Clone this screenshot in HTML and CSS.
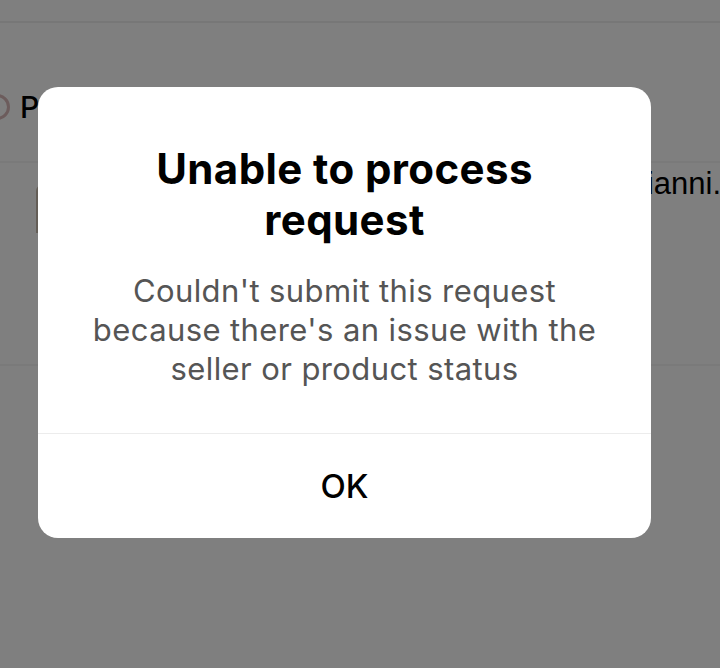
FILE: index.html
```html
<!DOCTYPE html>
<html lang="en">
<head>
    <meta charset="UTF-8">
    <meta name="viewport" content="width=device-width, initial-scale=1.0">
    <title>Unable to process request</title>
    <link rel="stylesheet" href="styles.css">
</head>
<body>
    <!-- Page behind the dialog -->
    <div class="page">
        <div class="top-bar"></div>
        <div class="shop-row">
            <span class="shop-avatar"></span>
            <span class="shop-name">P</span>
        </div>
        <div class="product-row">
            <span class="product-thumb"></span>
            <span class="product-title">Gianni.</span>
        </div>
    </div>

    <!-- Dim overlay + dialog -->
    <div class="overlay">
        <div class="dialog">
            <div class="dialog-body">
                <h1 class="dialog-title">Unable to process request</h1>
                <p class="dialog-text">Couldn't submit this request because there's an issue with the seller or product status</p>
            </div>
            <button class="dialog-button">OK</button>
        </div>
    </div>
</body>
</html>
```

FILE: styles.css
```css
* {
    margin: 0;
    padding: 0;
    box-sizing: border-box;
}

body {
    font-family: Inter, 'Liberation Sans', sans-serif;
    background: #ffffff;
    width: 720px;
    height: 668px;
    overflow: hidden;
    position: relative;
}

/* Background page */
.page {
    display: flex;
    flex-direction: column;
}

.top-bar {
    height: 23px;
    border-bottom: 2px solid #efefef;
}

.shop-row {
    height: 140px;
    display: flex;
    align-items: center;
    gap: 10px;
    padding-top: 30px;
    border-bottom: 2px solid #f4f4f4;
}

.shop-avatar {
    width: 26px;
    height: 26px;
    margin-left: -16px;
    border-radius: 50%;
    border: 3px solid #d9b8b8;
}

.shop-name {
    font-size: 30px;
    font-weight: 500;
    color: #000;
}

.product-row {
    height: 203px;
    display: flex;
    justify-content: space-between;
    overflow: hidden;
    border-bottom: 2px solid #f4f4f4;
}

.product-thumb {
    width: 50px;
    height: 48px;
    margin: 22px 0 0 36px;
    border-left: 3px solid #c9bcae;
    border-top-left-radius: 6px;
}

.product-title {
    font-family: 'Liberation Sans', sans-serif;
    font-size: 31px;
    color: #000;
    white-space: nowrap;
    margin: 3px -1px 0 0;
}

/* Overlay and dialog */
.overlay {
    position: absolute;
    inset: 0;
    background: rgba(0, 0, 0, 0.5);
    display: flex;
    align-items: flex-start;
    justify-content: center;
    padding: 87px 69px 0 38px;
}

.dialog {
    width: 613px;
    background: #ffffff;
    border-radius: 20px;
    overflow: hidden;
    display: flex;
    flex-direction: column;
}

.dialog-body {
    padding: 56px 46px 45px;
    text-align: center;
    border-bottom: 1px solid #ececec;
}

.dialog-title {
    font-size: 42px;
    font-weight: 700;
    line-height: 51px;
    letter-spacing: 0.4px;
    color: #000;
    padding: 0 40px;
    margin-bottom: 26px;
}

.dialog-text {
    font-size: 31px;
    line-height: 39px;
    letter-spacing: 0.4px;
    color: #555555;
}

.dialog-button {
    height: 104px;
    border: none;
    background: transparent;
    font-family: Inter, 'Liberation Sans', sans-serif;
    font-size: 33px;
    font-weight: 500;
    color: #000;
}
```
